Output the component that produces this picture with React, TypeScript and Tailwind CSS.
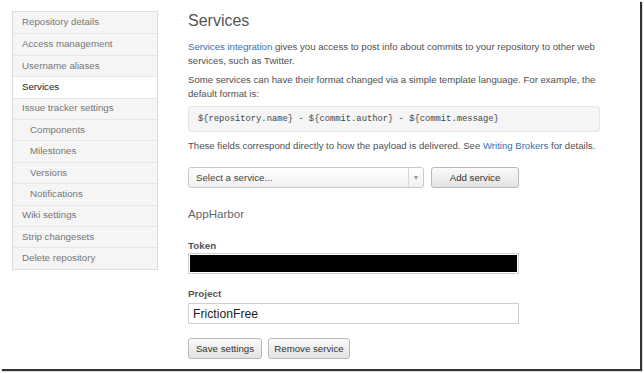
// Repository admin — Services settings page
const font = { fontFamily: '"Liberation Sans", Arial, sans-serif' }

const navItems = [
  { label: 'Repository details' },
  { label: 'Access management' },
  { label: 'Username aliases' },
  { label: 'Services', active: true },
  { label: 'Issue tracker settings' },
  { label: 'Components', sub: true },
  { label: 'Milestones', sub: true },
  { label: 'Versions', sub: true },
  { label: 'Notifications', sub: true },
  { label: 'Wiki settings' },
  { label: 'Strip changesets' },
  { label: 'Delete repository' },
]

function Sidebar() {
  return (
    <ul className="mt-[11px] ml-[12px] w-[146px] self-start border border-[#dcdcdc] bg-[#f5f5f5]">
      {navItems.map((item, i) => (
        <li
          key={item.label}
          className={
            'flex h-[21.4px] items-center text-[9.7px] ' +
            (i > 0 ? 'border-t border-[#e6e6e6] ' : '') +
            (item.sub ? 'pl-[17px] ' : 'pl-[9px] ') +
            (item.active ? 'bg-white text-[#1a1a1a]' : 'text-[#777]')
          }
        >
          {item.label}
        </li>
      ))}
    </ul>
  )
}

function Button({ children, className = '' }: { children: React.ReactNode; className?: string }) {
  return (
    <button
      className={
        'h-[21px] rounded-[3px] border border-[#b9b9b9] bg-gradient-to-b from-[#fbfbfb] to-[#e2e2e2] text-[9.7px] text-[#333] ' +
        className
      }
    >
      {children}
    </button>
  )
}

export default function App() {
  return (
    <div className="h-[373px] w-[644px] bg-white" style={font}>
      <div className="flex h-[369px] w-[640px] bg-white shadow-[2px_2px_1px_rgba(0,0,0,0.8)]">
        <Sidebar />

        <div className="ml-[30px] w-[412px] pt-[12px] text-[9.6px] leading-[14px] text-[#505050]">
          <h1 className="text-[16px] leading-[18px] text-[#555]">Services</h1>

          <p className="mt-[10px]">
            <span className="text-[#3572b0]">Services integration</span> gives you access to post info about commits
            to your repository to other web services, such as Twitter.
          </p>
          <p className="mt-[5px]">
            Some services can have their format changed via a simple template language. For example, the default
            format is:
          </p>

          <div
            className="mt-[5px] flex h-[26px] items-center rounded-[3px] border border-[#e6e6e6] bg-[#f5f5f5] pl-[9px] text-[8.8px] text-[#444]"
            style={{ fontFamily: '"Liberation Mono", "Courier New", monospace' }}
          >
            {'${repository.name} - ${commit.author} - ${commit.message}'}
          </div>

          <p className="mt-[7px]">
            These fields correspond directly to how the payload is delivered. See{' '}
            <span className="text-[#3572b0]">Writing Brokers</span> for details.
          </p>

          <div className="mt-[14px] flex gap-[7px]">
            <div className="flex h-[21px] w-[236px] items-center rounded-[3px] border border-[#c8c8c8] bg-gradient-to-b from-white to-[#f0f0f0]">
              <span className="flex-1 pl-[7px] text-[9.7px] text-[#444]">Select a service...</span>
              <span className="flex h-full w-[15px] items-center justify-center border-l border-[#d8d8d8] text-[7px] text-[#999]">
                ▼
              </span>
            </div>
            <Button className="w-[88px]">Add service</Button>
          </div>

          <h2 className="mt-[19px] text-[11.6px] leading-[14px] text-[#666]">AppHarbor</h2>

          <label className="mt-[19px] block text-[9.8px] font-bold leading-[12px] text-[#555]">Token</label>
          <div className="mt-[1px] h-[21px] w-[331px] border border-[#cfcfcf] p-px">
            <div className="h-full w-full bg-black" />
          </div>

          <label className="mt-[14px] block text-[9.8px] font-bold leading-[12px] text-[#555]">Project</label>
          <div className="mt-[3px] flex h-[21px] w-[331px] items-center border border-[#cfcfcf] pl-[4px] text-[12.2px] text-[#222]">
            FrictionFree
          </div>

          <div className="mt-[14px] flex gap-[6px]">
            <Button className="w-[74px]">Save settings</Button>
            <Button className="w-[82px]">Remove service</Button>
          </div>
        </div>
      </div>
    </div>
  )
}
